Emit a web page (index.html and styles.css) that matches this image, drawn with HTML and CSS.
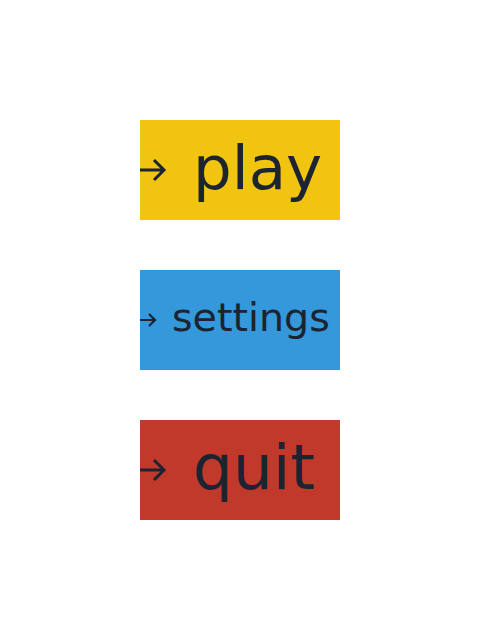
FILE: index.html
```html
<!DOCTYPE html>
<html>
<head>
<meta charset="utf-8">
<link rel="stylesheet" href="styles.css">
</head>
<body>
<main class="menu">
  <button class="item play">
    <svg class="arrow big" viewBox="0 0 27 26"><path d="M-2 13 H24 M14 3 L24 13 L14 23" fill="none" stroke="#1b2430" stroke-width="3"/></svg>
    <span class="label">play</span>
  </button>
  <button class="item settings">
    <svg class="arrow small" viewBox="0 0 17 16"><path d="M-2 8 H15 M9 2 L15 8 L9 14" fill="none" stroke="#1b2430" stroke-width="2.2"/></svg>
    <span class="label">settings</span>
  </button>
  <button class="item quit">
    <svg class="arrow big" viewBox="0 0 27 26"><path d="M-2 13 H24 M14 3 L24 13 L14 23" fill="none" stroke="#1b2430" stroke-width="3"/></svg>
    <span class="label">quit</span>
  </button>
</main>
</body>
</html>
```
FILE: styles.css
```css
html, body { margin: 0; padding: 0; background: #fff; }
.menu {
  display: flex;
  flex-direction: column;
  gap: 50px;
  padding: 120px 140px;
}
.item {
  width: 200px;
  height: 100px;
  border: 0;
  padding: 0;
  margin: 0;
  display: flex;
  align-items: center;
  overflow: hidden;
  font-family: "DejaVu Sans", sans-serif;
  color: #1b2430;
  cursor: pointer;
}
.play { background: #f1c40f; }
.settings { background: #3498db; }
.quit { background: #c0392b; }
.arrow { flex: none; }
.arrow.big { width: 27px; height: 26px; }
.arrow.small { width: 17px; height: 16px; }
.label { white-space: nowrap; line-height: 1; }
.play .label { font-size: 61px; margin-left: 26px; margin-top: -6px; }
.settings .label { font-size: 39.6px; margin-left: 15px; margin-top: -4px; }
.quit .label { font-size: 63px; margin-left: 26px; margin-top: -6px; }
```
